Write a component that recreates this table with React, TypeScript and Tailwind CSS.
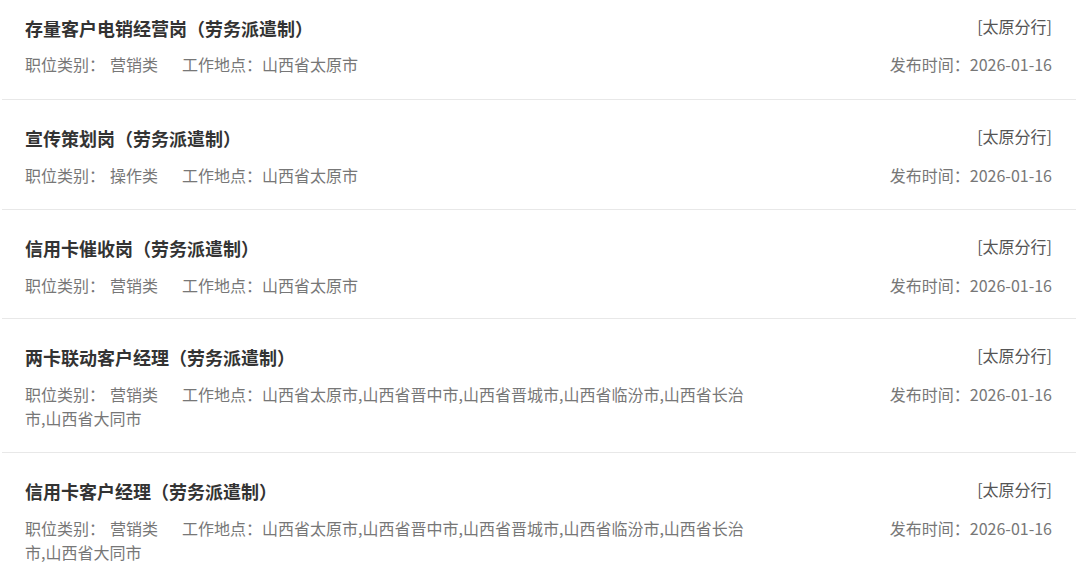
import React from "react";

type Job = { title: string; type: string; place: string; branch: string; date: string };

const jobs: Job[] = [
  { title: "存量客户电销经营岗（劳务派遣制）", type: "营销类", place: "山西省太原市", branch: "[太原分行]", date: "2026-01-16" },
  { title: "宣传策划岗（劳务派遣制）", type: "操作类", place: "山西省太原市", branch: "[太原分行]", date: "2026-01-16" },
  { title: "信用卡催收岗（劳务派遣制）", type: "营销类", place: "山西省太原市", branch: "[太原分行]", date: "2026-01-16" },
  {
    title: "两卡联动客户经理（劳务派遣制）",
    type: "营销类",
    place: "山西省太原市,山西省晋中市,山西省晋城市,山西省临汾市,山西省长治市,山西省大同市",
    branch: "[太原分行]",
    date: "2026-01-16",
  },
  {
    title: "信用卡客户经理（劳务派遣制）",
    type: "营销类",
    place: "山西省太原市,山西省晋中市,山西省晋城市,山西省临汾市,山西省长治市,山西省大同市",
    branch: "[太原分行]",
    date: "2026-01-16",
  },
];

export default function App() {
  return (
    <div
      className="w-[1080px] h-[568px] overflow-hidden bg-white"
      style={{ fontFamily: '"Noto Sans CJK SC", "Noto Sans", sans-serif' }}
    >
      <div className="ml-[2px] mr-[4px]">
        {jobs.map((j, i) => (
          <div
            key={i}
            className={`flex justify-between border-b border-[#e8e8e8] pl-[23px] pr-[24px] ${
              i === 0 ? "pt-[16px] pb-[23px]" : "pt-[26px] pb-[21.5px]"
            }`}
          >
            <div className="w-[725px]">
              <div className="text-[18px] leading-[24px] font-bold text-[#333333]">{j.title}</div>
              <div
                className={`${i === 0 ? "mt-[12px]" : "mt-[13px]"} text-[16px] leading-[24px] text-[#777777]`}
              >
                <span>职位类别：</span>
                <span className="ml-[5px]">{j.type}</span>
                <span className="ml-[24px]">工作地点：{j.place}</span>
              </div>
            </div>
            <div className="flex flex-col items-end">
              <div className="text-[16px] leading-[24px] text-[#555555] -mt-[2px]">{j.branch}</div>
              <div
                className={`${i === 0 ? "mt-[14px]" : "mt-[15px]"} text-[16px] leading-[24px] text-[#777777]`}
              >
                发布时间：{j.date}
              </div>
            </div>
          </div>
        ))}
      </div>
    </div>
  );
}
